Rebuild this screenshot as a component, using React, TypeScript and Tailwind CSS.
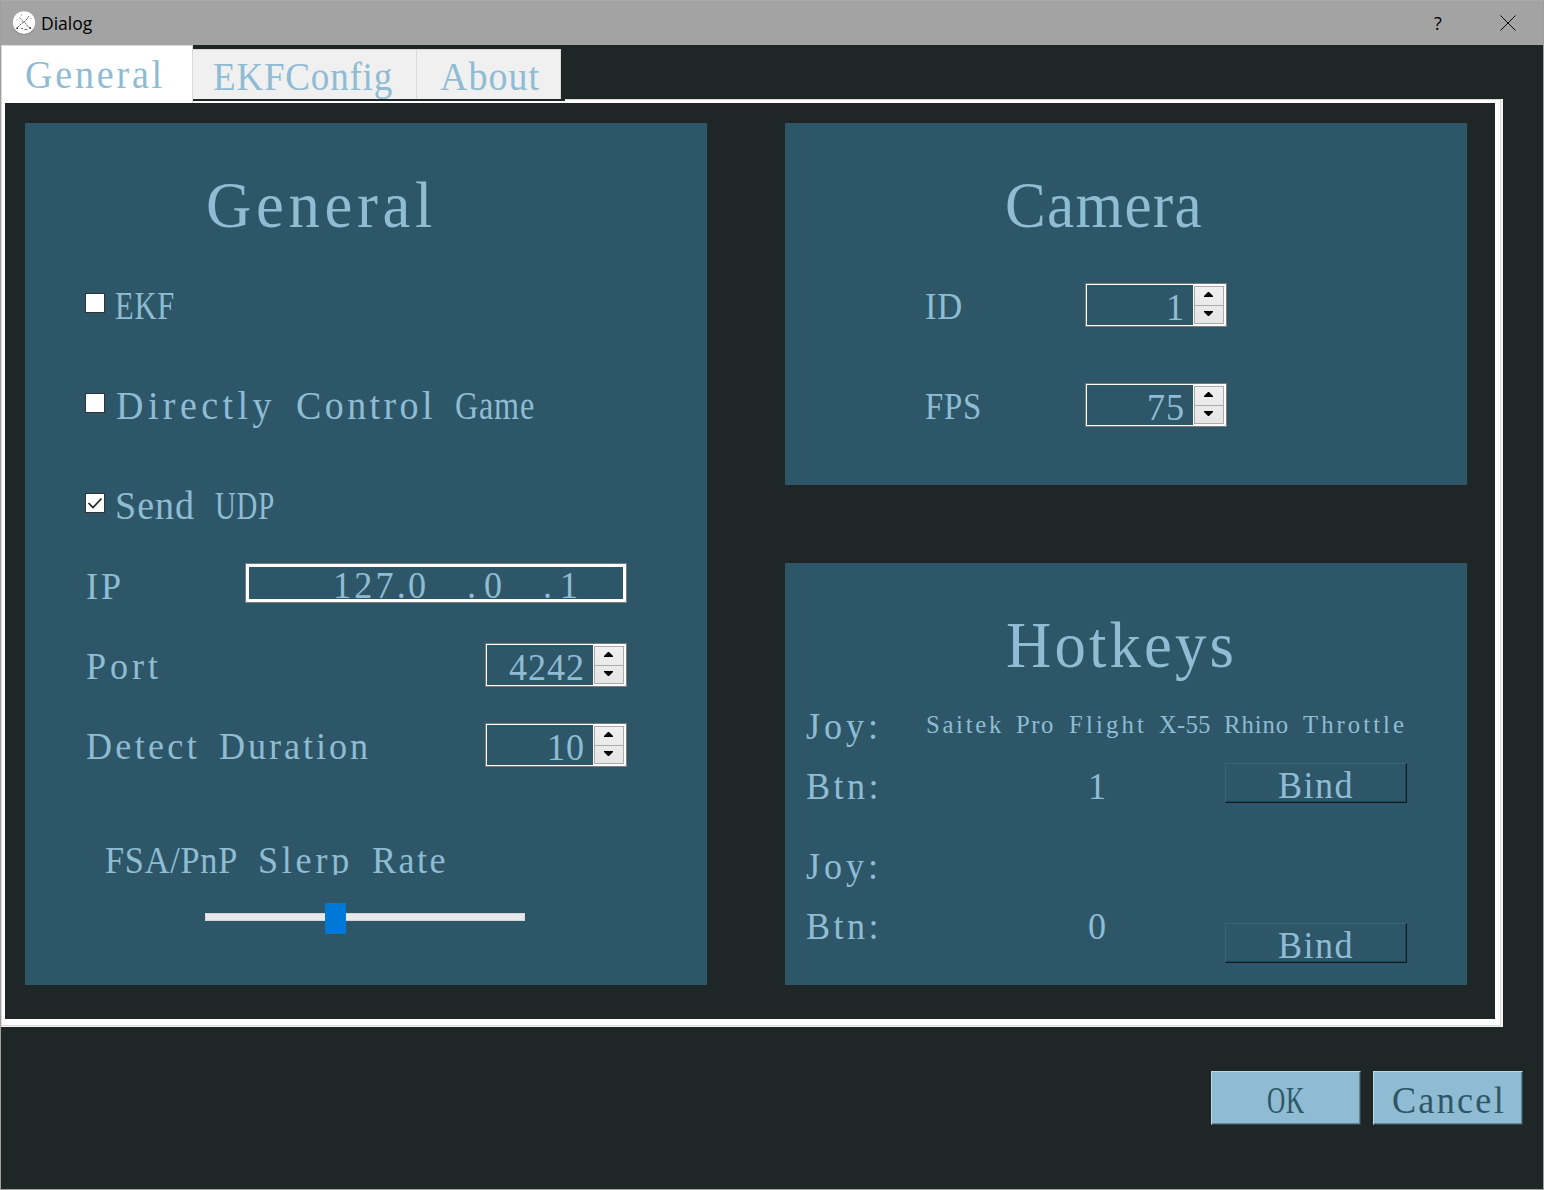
import React from "react";

/* Advance widths of the serif face, in thousandths of an em. */
const ADVANCE: Record<string, number> = {
  A: 722, B: 667, C: 667, D: 722, E: 611, F: 556, G: 722, H: 722, I: 333, J: 389, K: 722,
  O: 722, P: 556, R: 667, S: 556, T: 611, U: 722, X: 722,
  a: 444, b: 500, c: 444, d: 500, e: 444, f: 333, g: 500, h: 500, i: 278, k: 500, l: 278,
  m: 778, n: 500, o: 500, p: 500, r: 333, s: 389, t: 278, u: 500, y: 500,
  "/": 278, ".": 250, ":": 278, "-": 333,
};

/* One word fitted to half-em columns; a trailing space takes one more column. */
function Word({ text, size }: { text: string; size: number }) {
  const glyphs = text.trim().split("");
  const mean = glyphs.reduce((sum, c) => sum + (ADVANCE[c] ?? 500), 0) / glyphs.length / 1000;
  const scale = Math.min(0.95, 0.48 / mean);
  const letter = 0.5 / scale - mean;
  return (
    <span className="inline-block" style={{ width: (text.length * size) / 2 }}>
      <span
        className="inline-block origin-left"
        style={{
          transform: `scaleX(${scale})`,
          letterSpacing: `${letter}em`,
          marginLeft: (letter * size * scale) / 4,
        }}
      >
        {text}
      </span>
    </span>
  );
}

/* Text set on a half-em grid, like a fixed-pitch serif font. */
function Mono({ text, size, className = "" }: { text: string; size: number; className?: string }) {
  const words = text.match(/\S+\s*/g) ?? [];
  return (
    <span
      className={`block shrink-0 whitespace-pre font-['Liberation_Serif',serif] ${className}`}
      style={{ fontSize: size, width: (text.length * size) / 2 }}
    >
      {words.map((word, i) => (
        <Word key={i} text={word} size={size} />
      ))}
    </span>
  );
}

function Check({ label, checked = false }: { label: string; checked?: boolean }) {
  return (
    <div className="flex h-10 items-center gap-2.5">
      <span className="flex size-5 items-center justify-center border border-[#333] bg-white">
        {checked && (
          <svg viewBox="0 0 18 18" className="size-[18px]" fill="none" stroke="#222" strokeWidth="1.7">
            <path d="M2.5 9 7 13.5 15.5 4.5" />
          </svg>
        )}
      </span>
      <Mono text={label} size={40} className="h-10 leading-[45px]" />
    </div>
  );
}

function Spin({ value }: { value: string }) {
  return (
    <div className="flex h-11 w-[142px] border border-[#7a7a7a]">
      <div className="flex w-full border border-white">
        <div className="flex flex-1 justify-end pr-2">
          <Mono text={value} size={38} className="h-10 leading-[44px]" />
        </div>
        <div className="flex w-8 bg-[#fafafa] py-px pr-px pl-px">
          <div className="flex w-full flex-col border border-[#acacac] bg-linear-to-b from-[#f0f0f0] to-[#e5e5e5]">
            <div className="flex h-[19px] justify-center border-b border-[#acacac] pt-[5px] pr-px">
              <svg className="h-[5px] w-[9px]" viewBox="0 0 9 5">
                <path d="M4 0h1l4 4v1H0V4z" />
              </svg>
            </div>
            <div className="flex flex-1 justify-center pt-[5px] pr-px">
              <svg className="h-[5px] w-[9px]" viewBox="0 0 9 5">
                <path d="M4 5h1l4-4V0H0v1z" />
              </svg>
            </div>
          </div>
        </div>
      </div>
    </div>
  );
}

function Bind() {
  return (
    <button className="flex h-10 w-[182px] justify-center border border-t-[#38637a] border-r-[#0e1a20] border-b-[#0e1a20] border-l-[#38637a] shadow-[inset_-1px_-1px_0_#234452]">
      <Mono text="Bind" size={38} className="h-[38px] text-left leading-[42px]" />
    </button>
  );
}

function Action({ label }: { label: string }) {
  return (
    <button className="flex h-[54px] w-[150px] justify-center border border-t-[#b5dcea] border-r-[#31454e] border-b-[#31454e] border-l-[#b5dcea] bg-[#8fbcd3] text-[#2d5768] shadow-[inset_-1px_-1px_0_#5f8496]">
      <Mono text={label} size={38} className="h-[52px] text-left leading-[56px]" />
    </button>
  );
}

function Label({ text }: { text: string }) {
  return <Mono text={text} size={38} className="h-10 leading-[46px]" />;
}

export default function App() {
  return (
    <div className="flex h-[1190px] w-[1544px] flex-col overflow-hidden border border-t-0 border-[#a0a0a0] bg-[#1f2726] text-[#8fbcd3]">
      <header className="-mx-px flex h-[45px] shrink-0 items-center border-t border-[#aaa] bg-[#a3a3a3] pl-3 text-black">
        <svg viewBox="0 0 24 24" className="size-6">
          <circle cx="12" cy="12" r="11.5" fill="#777" />
          <circle cx="12" cy="11.6" r="11.3" fill="#fff" />
          <path d="M7.5 6.5 10 9.5 12 11 15 8 17 5M12 11 9 13 5 17M13 11.5 15 14.5 18 17" fill="none" stroke="#444" strokeWidth=".8" strokeDasharray="2.4 .7" />
          <path d="M9 17.5h2M12.5 18.5h3M4.5 9h.8M18.5 7.5h.8M9 4h.8" stroke="#667" strokeWidth=".9" />
          <path d="M4.5 17.2h1.4M17.5 17h1.4" stroke="#111" strokeWidth="1.4" />
        </svg>
        <span className="ml-[5px] font-['Open_Sans',sans-serif] text-[17.5px]">Dialog</span>
        <span className="ml-auto w-[9px] font-['Open_Sans',sans-serif] text-[18px]">?</span>
        <svg viewBox="0 0 16 16" className="mr-7 ml-[57px] size-4" stroke="#000" strokeWidth=".95">
          <path d="M.5.5 15.5 15.5M15.5.5.5 15.5" />
        </svg>
      </header>

      <nav className="relative z-10 flex h-[54px] shrink-0 items-start">
        <div className="h-[58px] w-48 border border-b-0 border-[#d9d9d9] bg-white pl-[22px]">
          <Mono text="General" size={40} className="h-14 leading-[58px]" />
        </div>
        <div className="mt-1 h-[50px] w-56 border-t border-r border-[#d9d9d9] bg-[#f0f0f0] pl-5">
          <Mono text="EKFConfig" size={40} className="h-12 leading-[53px]" />
        </div>
        <div className="mt-1 h-[50px] w-36 border-t border-r border-[#d9d9d9] bg-[#f0f0f0] pl-[23px]">
          <Mono text="About" size={40} className="h-12 leading-[53px]" />
        </div>
        <div className="absolute top-[54px] left-48 h-0.5 w-[372px] bg-[#1f2726]" />
      </nav>

      <main className="h-[928px] w-[1502px] shrink-0 border-r-2 border-b border-[#f4f4f4]">
        <div className="h-full border border-[#d9d9d9]">
          <div className="flex h-full gap-[78px] border-t-[3px] border-r-[5px] border-b-[6px] border-l-[3px] border-white pt-5 pl-5">
            <section className="flex h-[862px] w-[682px] flex-col bg-[#2d5768] pl-[60px]">
              <Mono text="General" size={66} className="mt-[42px] ml-[120px] h-20 leading-[80px]" />
              <div className="mt-[38px] flex flex-col gap-[60px]">
                <Check label="EKF" />
                <Check label="Directly Control Game" />
                <Check label="Send UDP" checked />
              </div>
              <div className="mt-10 flex w-[542px] justify-between">
                <Label text="IP" />
                <div className="h-10 w-[382px] border border-[#7a7a7a]">
                  <div className="flex h-full border-[3px] border-white pl-[83px]">
                    <Mono text="127." size={38} className="h-8 leading-[36px]" />
                    <Mono text="0" size={38} className="h-8 leading-[36px]" />
                    <Mono text="." size={38} className="ml-[38px] h-8 leading-[36px]" />
                    <Mono text="0" size={38} className="h-8 leading-[36px]" />
                    <Mono text="." size={38} className="ml-[38px] h-8 leading-[36px]" />
                    <Mono text="1" size={38} className="h-8 leading-[36px]" />
                  </div>
                </div>
              </div>
              <div className="mt-10 flex w-[542px] justify-between">
                <Label text="Port" />
                <Spin value="4242" />
              </div>
              <div className="mt-9 flex w-[542px] justify-between">
                <Label text="Detect Duration" />
                <Spin value="10" />
              </div>
              <div className="mt-[68px] ml-5 flex h-10 overflow-hidden">
                <Mono text="FSA/PnP Slerp Rate" size={38} className="leading-[51px]" />
              </div>
              <div className="relative mt-7 ml-[120px] flex h-[31px] w-80 items-center">
                <div className="mb-[3px] h-2 w-full border border-[#d6d6d6] bg-[#e7eaea]" />
                <div className="absolute top-0 left-[120px] h-[31px] w-[21px] bg-[#0078d7]" />
              </div>
            </section>

            <div className="flex flex-col gap-[78px]">
              <section className="flex h-[362px] w-[682px] flex-col bg-[#2d5768] pl-[140px]">
                <Mono text="Camera" size={66} className="mt-[42px] ml-20 h-20 leading-[80px]" />
                <div className="mt-[38px] flex w-[302px] justify-between">
                  <Label text="ID" />
                  <Spin value="1" />
                </div>
                <div className="mt-14 flex w-[302px] justify-between">
                  <Label text="FPS" />
                  <Spin value="75" />
                </div>
              </section>

              <section className="flex h-[422px] w-[682px] flex-col bg-[#2d5768] pl-5">
                <Mono text="Hotkeys" size={66} className="mt-[42px] ml-[200px] h-20 leading-[80px]" />
                <div className="mt-[18px] flex h-10">
                  <Label text="Joy:" />
                  <Mono text="Saitek Pro Flight X-55 Rhino Throttle" size={26} className="ml-11 h-10 leading-[43px]" />
                </div>
                <div className="mt-5 flex h-10 w-[602px]">
                  <Label text="Btn:" />
                  <div className="ml-[207px] flex-1">
                    <Label text="1" />
                  </div>
                  <Bind />
                </div>
                <div className="mt-10 flex h-10">
                  <Label text="Joy:" />
                </div>
                <div className="mt-5 flex h-10 w-[602px]">
                  <Label text="Btn:" />
                  <div className="ml-[207px] flex-1">
                    <Label text="0" />
                  </div>
                  <div className="pt-5">
                    <Bind />
                  </div>
                </div>
              </section>
            </div>
          </div>
        </div>
      </main>

      <footer className="mt-11 mr-5 flex justify-end gap-3">
        <Action label="OK" />
        <Action label="Cancel" />
      </footer>
    </div>
  );
}
